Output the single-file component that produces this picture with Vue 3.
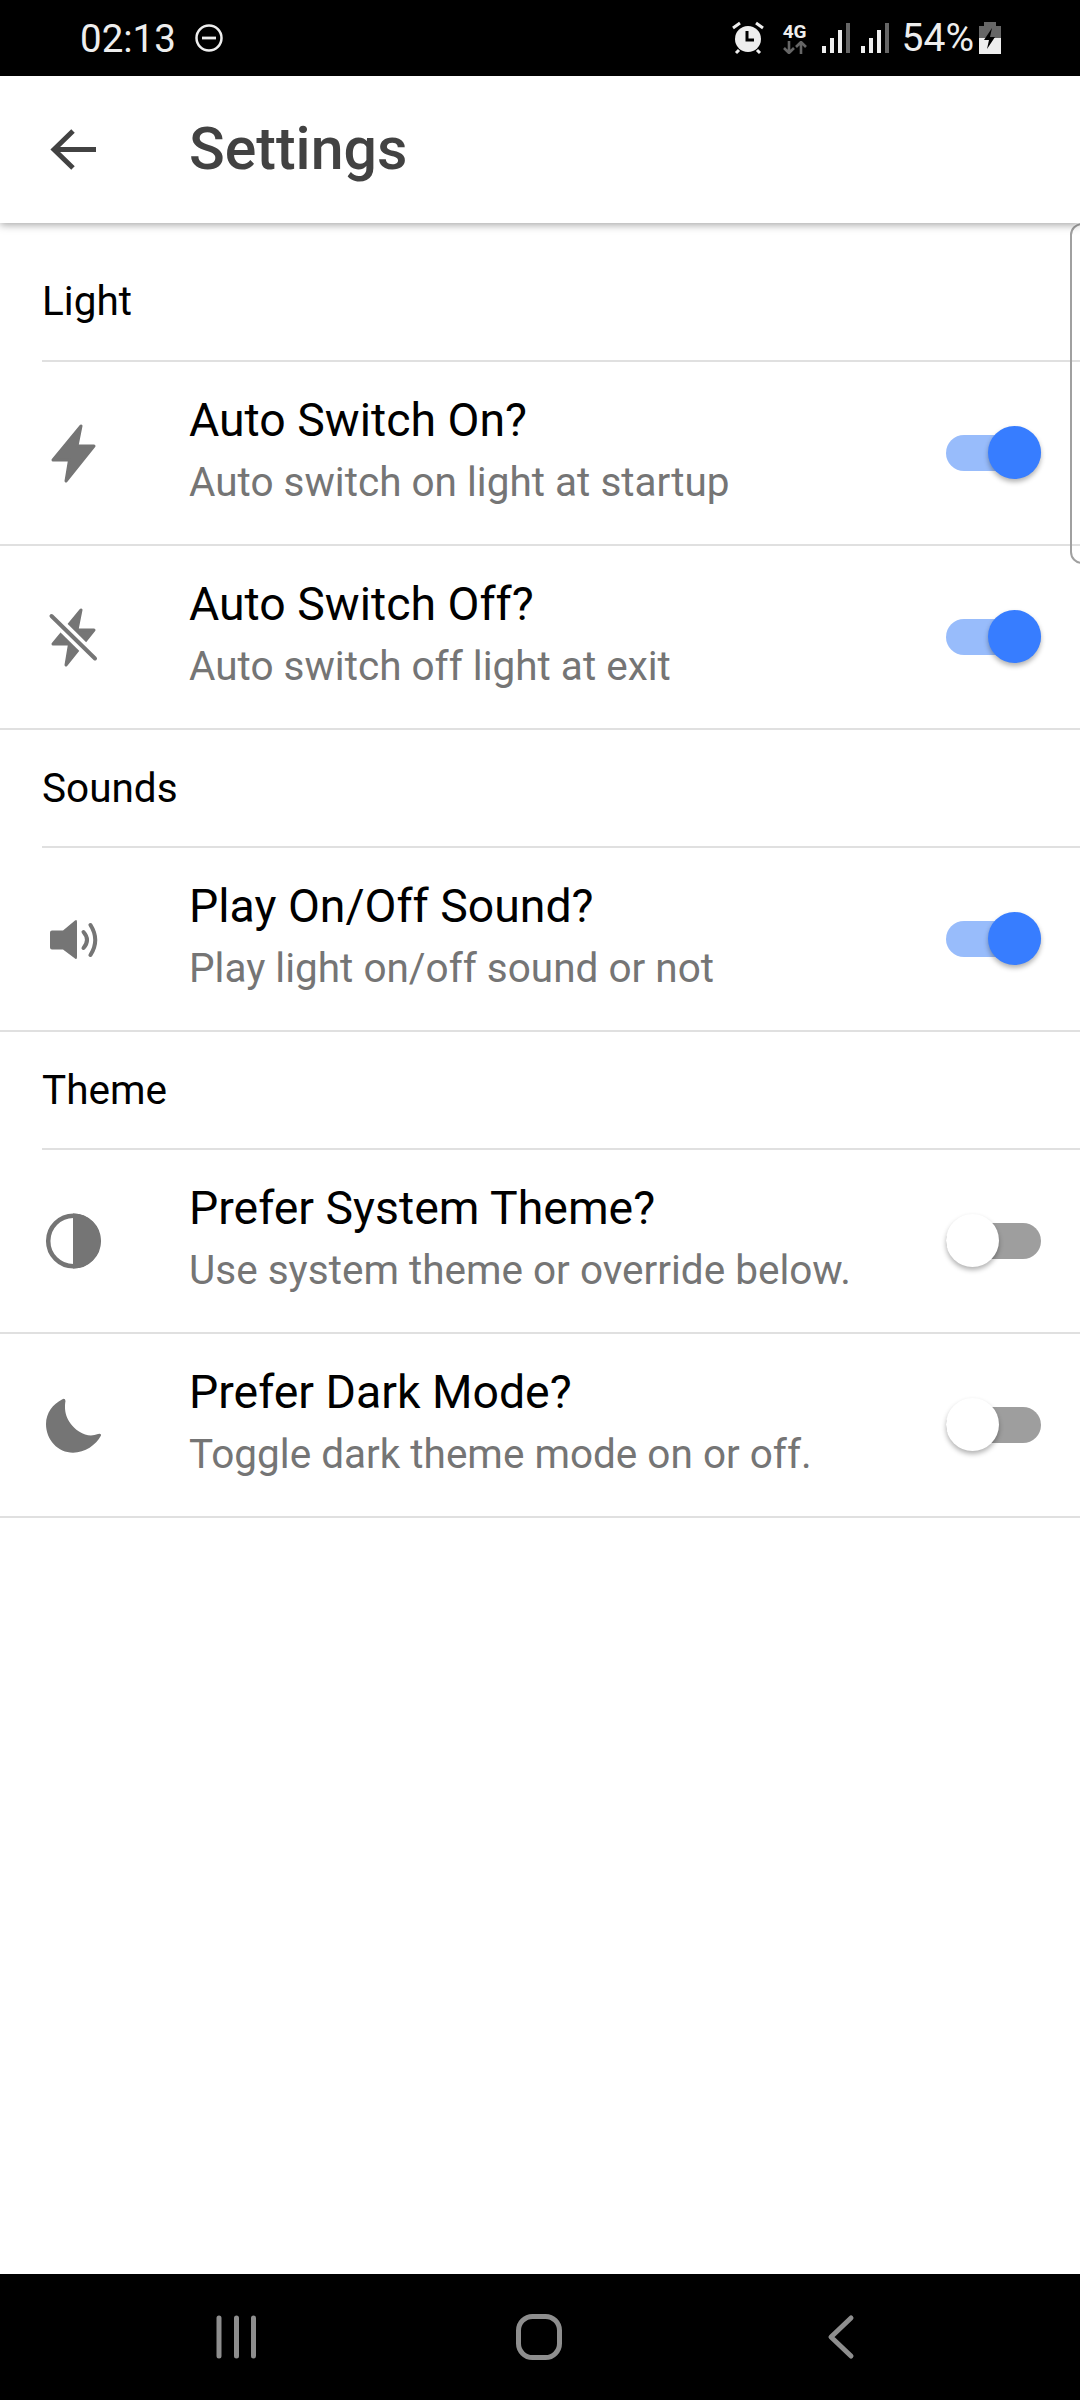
<template>
  <div class="screen">
    <div class="status-bar">
      <div class="status-left">
        <span class="clock">02:13</span>
        <svg class="dnd" width="30" height="30" viewBox="0 0 30 30">
          <circle cx="15" cy="15" r="12.5" fill="none" stroke="#eee" stroke-width="2.5" />
          <rect x="8" y="13.6" width="14" height="2.8" fill="#eee" />
        </svg>
      </div>
      <div class="status-right">
        <svg width="36" height="36" viewBox="0 0 36 36">
          <circle cx="18" cy="19" r="13" fill="#eee" />
          <path d="M17 11v9h7" fill="none" stroke="#000" stroke-width="3" />
          <path d="M3 8l7-5M33 8l-7-5" stroke="#eee" stroke-width="3" />
          <path d="M9 30l-3 3M27 30l3 3" stroke="#eee" stroke-width="3" />
        </svg>
        <div class="net">
          <span class="net-label">4G</span>
          <svg width="24" height="13" viewBox="0 0 24 13">
            <path d="M6 0v12M1 7l5 5 5-5" fill="none" stroke="#666" stroke-width="2.6" />
            <path d="M18 13V1M13 6l5-5 5 5" fill="none" stroke="#666" stroke-width="2.6" />
          </svg>
        </div>
        <svg class="signal" width="28" height="30" viewBox="0 0 28 30">
          <rect x="0" y="23" width="4" height="7" fill="#eee" />
          <rect x="8" y="15" width="4" height="15" fill="#eee" />
          <rect x="16" y="7" width="4" height="23" fill="#eee" />
          <rect x="24" y="0" width="4" height="30" fill="#666" />
        </svg>
        <svg class="signal" width="28" height="30" viewBox="0 0 28 30">
          <rect x="0" y="23" width="4" height="7" fill="#eee" />
          <rect x="8" y="15" width="4" height="15" fill="#eee" />
          <rect x="16" y="7" width="4" height="23" fill="#eee" />
          <rect x="24" y="0" width="4" height="30" fill="#666" />
        </svg>
        <span class="percent">54%</span>
        <svg class="battery" width="22" height="32" viewBox="0 0 22 32">
          <rect x="5" y="0" width="12" height="4" fill="#666" />
          <rect x="0" y="4" width="22" height="14" fill="#666" />
          <rect x="0" y="16" width="22" height="16" fill="#eee" />
          <path d="M13 6L5 18h5l-2 9 8-12h-5z" fill="#000" />
        </svg>
      </div>
    </div>

    <header class="app-bar">
      <svg class="back" width="48" height="48" viewBox="0 0 48 48">
        <path d="M48 23.500H6M25 5L6 23.500 25 42" fill="none" stroke="#424242" stroke-width="5" />
      </svg>
      <h1>Settings</h1>
    </header>

    <main class="content">
      <div class="scroll-hint"></div>
      <section v-for="(group, i) in groups" :key="group.title" :class="{ first: i === 0 }">
        <div class="group-title">{{ group.title }}</div>
        <div v-for="item in group.items" :key="item.title" class="row">
          <div class="row-icon">
            <svg width="60" height="60" viewBox="0 0 60 60">
              <template v-if="item.icon === 'bolt' || item.icon === 'bolt-off'">
                <path d="M39 3L35 23H52L24 58L27.500 37H11Z" fill="#757575" stroke="#757575" stroke-width="3" stroke-linejoin="round" />
              </template>
              <template v-if="item.icon === 'bolt-off'">
                <path d="M8.700 8L53.700 52.300" stroke="#fff" stroke-width="11" />
                <path d="M9.500 9L53 51.500" stroke="#757575" stroke-width="4" stroke-linecap="round" />
              </template>
              <template v-if="item.icon === 'sound'">
                <path d="M10 21.500H21L33 11.500Q35 10 35 13V48Q35 51 33 49.500L21 40.500H10Q8 40.500 8 38.500V23.500Q8 21.500 10 21.500Z" fill="#757575" />
                <path d="M41.500 23Q48.500 31 41.500 39" fill="none" stroke="#757575" stroke-width="4" stroke-linecap="round" />
                <path d="M48.500 16Q58 31 48.500 46" fill="none" stroke="#757575" stroke-width="4" stroke-linecap="round" />
              </template>
              <template v-if="item.icon === 'contrast'">
                <circle cx="31.500" cy="30" r="25.300" fill="#fff" stroke="#757575" stroke-width="4.500" />
                <path d="M31 2.500A27.500 27.500 0 0 1 31 57.500Z" fill="#757575" />
              </template>
              <template v-if="item.icon === 'moon'">
                <path d="M20 4.500Q23 2.500 23.500 6C22 14 23 27 37 36.500C44 41 50 41.500 56 39Q59.500 38 59 40.500C54 50 43 57.700 31 57.700C16 57.700 4 45 4 29C4 18 11 9 20 4.500Z" fill="#757575" />
              </template>
            </svg>
          </div>
          <div class="row-text">
            <div class="row-title">{{ item.title }}</div>
            <div class="row-sub">{{ item.sub }}</div>
          </div>
          <div class="switch" :class="{ on: item.on }">
            <div class="thumb"></div>
          </div>
        </div>
      </section>
    </main>

    <nav class="nav-bar">
      <svg width="44" height="48" viewBox="0 0 44 48">
        <path d="M5 5V43M22.500 5V43M39.500 5V43" stroke="#8e8e8e" stroke-width="5" stroke-linecap="round" />
      </svg>
      <svg width="48" height="48" viewBox="0 0 48 48">
        <rect x="3.500" y="3.500" width="41" height="41" rx="14" fill="none" stroke="#8e8e8e" stroke-width="5" />
      </svg>
      <svg width="36" height="48" viewBox="0 0 36 48">
        <path d="M31 5L11 24L31 43" fill="none" stroke="#8e8e8e" stroke-width="5" stroke-linecap="round" stroke-linejoin="round" />
      </svg>
    </nav>
  </div>
</template>

<script setup>
const groups = [
  {
    title: 'Light',
    items: [
      { icon: 'bolt', title: 'Auto Switch On?', sub: 'Auto switch on light at startup', on: true },
      { icon: 'bolt-off', title: 'Auto Switch Off?', sub: 'Auto switch off light at exit', on: true },
    ],
  },
  {
    title: 'Sounds',
    items: [
      { icon: 'sound', title: 'Play On/Off Sound?', sub: 'Play light on/off sound or not', on: true },
    ],
  },
  {
    title: 'Theme',
    items: [
      { icon: 'contrast', title: 'Prefer System Theme?', sub: 'Use system theme or override below.', on: false },
      { icon: 'moon', title: 'Prefer Dark Mode?', sub: 'Toggle dark theme mode on or off.', on: false },
    ],
  },
]
</script>

<style>
html, body { margin: 0; background: #fff; }
</style>

<style scoped>
.screen {
  width: 1080px;
  height: 2400px;
  display: flex;
  flex-direction: column;
  font-family: Roboto, "Liberation Sans", sans-serif;
  background: #fff;
  overflow: hidden;
}

.status-bar {
  height: 76px;
  flex: none;
  background: #000;
  color: #eee;
  display: flex;
  justify-content: space-between;
  align-items: center;
  padding: 0 79px 0 80px;
}
.status-left, .status-right { display: flex; align-items: center; }
.clock { font-size: 38.500px; margin-right: 18px; }
.status-right svg { flex: none; }
.net { display: flex; flex-direction: column; align-items: center; margin: 0 15px 0 17px; }
.net-label { font-size: 19px; font-weight: 700; line-height: 19px; }
.signal { margin-right: 11px; }
.signal + .percent { margin-left: 2px; }
.percent { font-size: 39px; margin-right: 5px; }

.app-bar {
  height: 147px;
  flex: none;
  display: flex;
  align-items: center;
  padding-left: 48px;
  box-shadow: 0 2px 8px rgba(0, 0, 0, 0.35);
  position: relative;
  z-index: 1;
  background: #fff;
}
.back { margin-right: 93px; }
h1 {
  margin: 0 0 3px;
  font-size: 59px;
  font-weight: 500;
  color: #424242;
}

.content { flex: 1; position: relative; }
.scroll-hint {
  position: absolute;
  top: 0;
  right: -14px;
  width: 20px;
  height: 337px;
  border: 2px solid #a0a0a0;
  border-radius: 12px;
}
.group-title {
  height: 117px;
  display: flex;
  align-items: center;
  margin-left: 42px;
  font-size: 40.500px;
  color: #000;
  border-bottom: 2px solid #e0e0e0;
}
section:not(.first) .group-title { height: 116px; }
.first { padding-top: 18px; }
.first .group-title { height: 119px; }
.row {
  height: 182px;
  display: flex;
  align-items: center;
  border-bottom: 2px solid #e0e0e0;
}
.row-icon {
  width: 60px;
  height: 60px;
  margin: 0 87px 0 42px;
}
.row-icon svg { display: block; }
.row-text { flex: 1; margin-bottom: 4px; }
.row-title { font-size: 46.400px; color: #000; line-height: 62px; }
.row-sub { font-size: 40.500px; color: #757575; line-height: 62px; }

.switch {
  position: relative;
  width: 95px;
  height: 36px;
  margin-right: 39px;
  border-radius: 18px;
  background: #9e9e9e;
}
.switch.on { background: #98bcfb; }
.thumb {
  position: absolute;
  top: -9px;
  left: 0;
  width: 53px;
  height: 53px;
  border-radius: 50%;
  background: #fff;
  box-shadow: 0 3px 5px rgba(0, 0, 0, 0.3);
}
.switch.on .thumb { left: 42px; background: #377dff; }

.nav-bar {
  height: 126px;
  flex: none;
  background: #000;
  display: flex;
  align-items: center;
  justify-content: space-between;
  padding: 0 224px 0 214px;
}
</style>
